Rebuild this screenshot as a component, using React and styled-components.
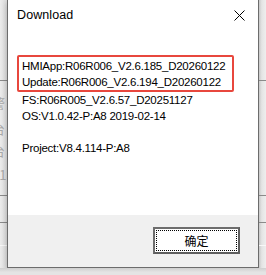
import React from 'react';
import styled, { createGlobalStyle } from 'styled-components';

const GlobalStyle = createGlobalStyle`
  html, body {
    margin: 0;
    padding: 0;
    background: #e9e9e9;
    overflow: hidden;
  }
`;

const Screen = styled.div`
  width: 266px;
  height: 275px;
  display: flex;
  flex-direction: column;
  background: #e6e6e6;
  font-family: "Liberation Sans", Arial, sans-serif;
  overflow: hidden;
`;

const Row = styled.div`
  display: flex;
  height: 268px;
`;

const Backdrop = styled.div`
  width: ${({ w }) => w}px;
  flex: none;
  overflow: hidden;
  background:
    linear-gradient(#8a8a8a, #8a8a8a) 0 80px / 100% 1px no-repeat,
    linear-gradient(#8a8a8a, #8a8a8a) 0 195px / 100% 1px no-repeat,
    linear-gradient(#8a8a8a, #8a8a8a) 0 222px / 100% 1px no-repeat,
    linear-gradient(#f8f8f8, #f8f8f8) 0 245px / 100% 1px no-repeat,
    ${({ side }) =>
      side === 'right'
        ? 'linear-gradient(90deg, #c9c9c9, #e4e4e4 40%, #eeeeee)'
        : 'linear-gradient(90deg, #ececec, #dddddd)'};
`;

const GhostText = styled.div`
  margin-left: -8px;
  margin-top: ${({ top }) => top}px;
  height: 14px;
  font-family: "Noto Sans CJK SC", sans-serif;
  font-size: 13px;
  line-height: 14px;
  color: #a9a9a9;
  white-space: nowrap;
`;

const Dialog = styled.div`
  width: 250px;
  flex: none;
  display: flex;
  flex-direction: column;
  border: 1px solid #6c6c6c;
  border-top: none;
  background: #ffffff;
  box-shadow: 0 2px 6px rgba(0, 0, 0, 0.25);
`;

const TitleBar = styled.div`
  height: 30px;
  display: flex;
  align-items: center;
  justify-content: space-between;
  padding: 0 9px 0 9px;
`;

const Title = styled.span`
  font-size: 12.5px;
  color: #000;
  letter-spacing: 0.1px;
`;

const CloseButton = styled.div`
  width: 20px;
  height: 20px;
  display: flex;
  align-items: center;
  justify-content: center;
`;

const Content = styled.div`
  flex: 1;
  padding: 25px 0 0 9px;
`;

const Highlight = styled.div`
  width: 210px;
  border: 2px solid #e8473d;
  border-radius: 2px;
  padding: 1px 0 0 3px;
`;

const Line = styled.div`
  height: 16px;
  font-size: 11.5px;
  line-height: 16px;
  letter-spacing: -0.25px;
  color: #000;
  white-space: nowrap;
  padding-left: ${({ indent }) => indent || 0}px;
`;

const Footer = styled.div`
  height: 52px;
  background: #f0f0f0;
  display: flex;
  justify-content: flex-end;
  padding: 12px 18px 0 0;
  box-sizing: border-box;
`;

const OkButton = styled.button`
  width: 87px;
  height: 27px;
  box-sizing: border-box;
  border: 2px solid #6d6d6d;
  border-right-color: #5f5f5f;
  border-bottom-color: #5f5f5f;
  background: #e1e1e1;
  padding: 1px;
  margin: 0;
  display: flex;
  cursor: pointer;
`;

const FocusRing = styled.span`
  flex: 1;
  display: flex;
  align-items: center;
  justify-content: center;
  border: 1px dotted #000;
  background: #ffffff;
  outline: 1px solid #ffffff;
  font-family: "Noto Sans CJK SC", sans-serif;
  font-size: 12px;
  color: #000;
`;

const Bottom = styled.div`
  flex: 1;
  background: linear-gradient(#cfcfcf, #e4e4e4 60%);
`;

export default function App() {
  return (
    <>
      <GlobalStyle />
      <Screen>
        <Row>
          <Backdrop w={7} side="left">
            <GhostText top={96}>警</GhostText>
            <GhostText top={12}>台</GhostText>
            <GhostText top={8}>台</GhostText>
            <GhostText top={10}>21</GhostText>
          </Backdrop>
          <Dialog>
            <TitleBar>
              <Title>Download</Title>
              <CloseButton>
                <svg width="11" height="11" viewBox="0 0 11 11">
                  <path d="M0.5 0.5L10.5 10.5M10.5 0.5L0.5 10.5" stroke="#000" strokeWidth="1" />
                </svg>
              </CloseButton>
            </TitleBar>
            <Content>
              <Highlight>
                <Line>HMIApp:R06R006_V2.6.185_D20260122</Line>
                <Line>Update:R06R006_V2.6.194_D20260122</Line>
              </Highlight>
              <Line indent={5}>FS:R06R005_V2.6.57_D20251127</Line>
              <Line indent={5}>OS:V1.0.42-P:A8 2019-02-14</Line>
              <Line indent={5}></Line>
              <Line indent={5}>Project:V8.4.114-P:A8</Line>
            </Content>
            <Footer>
              <OkButton>
                <FocusRing>确定</FocusRing>
              </OkButton>
            </Footer>
          </Dialog>
          <Backdrop w={7} side="right" />
        </Row>
        <Bottom />
      </Screen>
    </>
  );
}
